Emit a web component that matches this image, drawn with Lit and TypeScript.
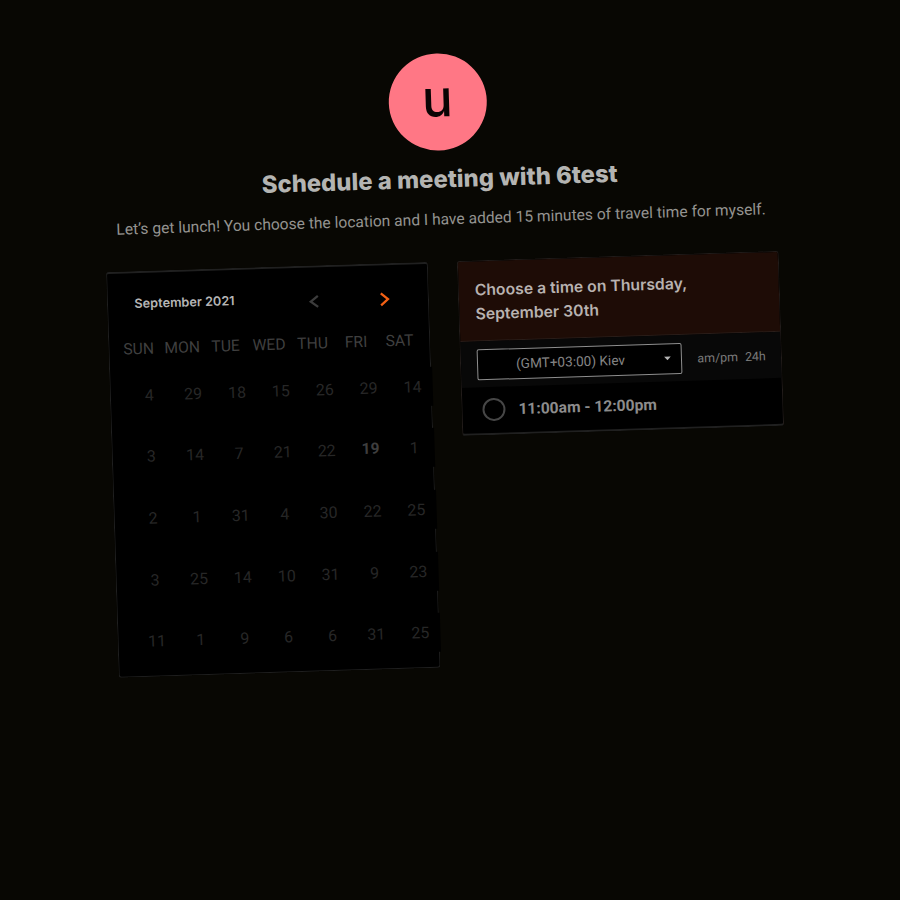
import { LitElement, html, css } from "lit";
import { customElement } from "lit/decorators.js";
import { classMap } from "lit/directives/class-map.js";

const WEEKDAYS = ["SUN", "MON", "TUE", "WED", "THU", "FRI", "SAT"];
const WEEKS = [
  [4, 29, 18, 15, 26, 29, 14],
  [3, 14, 7, 21, 22, 19, 1],
  [2, 1, 31, 4, 30, 22, 25],
  [3, 25, 14, 10, 31, 9, 23],
  [11, 1, 9, 6, 6, 31, 25],
];

@customElement("month-calendar")
class MonthCalendar extends LitElement {
  static styles = css`
    :host {
      display: block;
      box-sizing: border-box;
      width: 322px;
      height: 405.5px;
      border: 1px solid #1f1f1f;
      border-top: 2px solid #202020;
      border-radius: 3px;
      background: #000;
      font-family: Roboto, sans-serif;
    }
    .head {
      display: flex;
      align-items: center;
      height: 20px;
      padding: 23px 0 0 26.5px;
    }
    .title {
      width: 163px;
      font: 600 12.7px/20px Inter, sans-serif;
      color: #b5b5b5;
      margin-top: -5px;
    }
    .arrow {
      width: 32px;
      height: 16px;
      margin-right: 39.5px;
      margin-top: 2px;
      fill: none;
      stroke: #3c3c3c;
      stroke-width: 2.3;
    }
    .next {
      stroke: #f26014;
      margin-right: 0;
    }
    .names,
    .week {
      display: grid;
      grid-template-columns: repeat(7, 43.5px);
      text-align: center;
    }
    .names {
      margin: 23px 0 0 7.5px;
      font-size: 15.7px;
      line-height: 20px;
      color: #3f3f3f;
    }
    .weeks {
      display: grid;
      row-gap: 22.7px;
      margin: 16.5px 0 0 14.5px;
    }
    .week {
      grid-template-columns: repeat(7, 43.9px);
    }
    .day {
      box-sizing: border-box;
      padding-left: 4px;
      background: #000;
      font-size: 16px;
      line-height: 39px;
      color: #272727;
    }
    .today {
      font-weight: 700;
      font-size: 15.5px;
      color: #3e3e3e;
    }
  `;

  render() {
    return html`
      <div class="head">
        <div class="title">September 2021</div>
        <svg class="arrow" viewBox="0 0 32 16"><path d="M20 2.5L12.8 8L20 13.5" /></svg>
        <svg class="arrow next" viewBox="0 0 32 16"><path d="M12 2L19 8L12 14" /></svg>
      </div>
      <div class="names">${WEEKDAYS.map((d) => html`<div>${d}</div>`)}</div>
      <div class="weeks">
        ${WEEKS.map(
          (w) => html`<div class="week">
            ${w.map((d) => html`<div class=${classMap({ day: true, today: d === 19 })}>${d}</div>`)}
          </div>`
        )}
      </div>
    `;
  }
}

@customElement("time-picker")
class TimePicker extends LitElement {
  static styles = css`
    :host {
      display: block;
      box-sizing: border-box;
      width: 322px;
      height: 174.5px;
      border: 1px solid #221c1a;
      border-bottom: 2px solid #202020;
      border-radius: 3px;
      background: #000;
      overflow: hidden;
      font-family: Roboto, sans-serif;
    }
    .title {
      box-sizing: border-box;
      height: 80px;
      padding: 17px 60px 0 16px;
      border-bottom: 1px solid #2a1e1a;
      background: #1e0c06;
      font: 600 15.75px/24px Inter, sans-serif;
      color: #b8b2b0;
    }
    .bar {
      display: flex;
      align-items: center;
      height: 46px;
      padding-left: 15.5px;
      background: #080808;
      color: #7a7a7a;
      font-size: 12.4px;
    }
    .select {
      box-sizing: border-box;
      display: flex;
      align-items: center;
      width: 205px;
      height: 31px;
      border: 1px solid #8e8e8e;
      border-radius: 2px;
      background: #000;
      color: #858585;
      font-size: 13.6px;
    }
    .zone {
      width: 186px;
      text-align: center;
    }
    .caret {
      width: 7px;
      height: 4px;
      fill: #b5b5b5;
    }
    .ampm {
      margin: 0 7px 0 16px;
    }
    .slot {
      display: flex;
      align-items: center;
      height: 45px;
      padding-left: 20px;
      font-weight: 700;
      font-size: 15.6px;
      color: #8c8c8c;
    }
    .radio {
      box-sizing: border-box;
      width: 23px;
      height: 23px;
      margin-right: 13px;
      border: 2px solid #464646;
      border-radius: 50%;
    }
  `;

  render() {
    return html`
      <div class="title">Choose a time on Thursday, September 30th</div>
      <div class="bar">
        <div class="select">
          <span class="zone">(GMT+03:00) Kiev</span>
          <svg class="caret" viewBox="0 0 7 4"><path d="M0 0H7L3.5 3.8Z" /></svg>
        </div>
        <span class="ampm">am/pm</span><span>24h</span>
      </div>
      <div class="slot"><span class="radio"></span>11:00am - 12:00pm</div>
    `;
  }
}

@customElement("app-root")
class AppRoot extends LitElement {
  static styles = css`
    :host {
      display: block;
      box-sizing: border-box;
      height: 900px;
      padding: 64px 0 0 106px;
      overflow: hidden;
      background: #080703;
    }
    .page {
      display: flex;
      flex-direction: column;
      align-items: center;
      width: 673px;
      transform: rotate(-1.8deg);
      transform-origin: 0 209px;
    }
    .avatar {
      width: 98px;
      height: 97px;
      border-radius: 50%;
      background: #ff7785;
      color: #0a0404;
      font: 500 51px/90px Inter, sans-serif;
      text-align: center;
    }
    .heading {
      margin: 13px 0 0;
      font: 800 23.85px/32px Inter, sans-serif;
      color: #b4b4b2;
      white-space: nowrap;
    }
    .note {
      margin: 11.5px 0 30.5px;
      font: 400 15.6px/24px Roboto, sans-serif;
      color: #949390;
      white-space: nowrap;
    }
    .cards {
      display: flex;
      align-items: flex-start;
      justify-content: space-between;
      width: 100%;
    }
  `;

  render() {
    return html`
      <div class="page">
        <div class="avatar">u</div>
        <h1 class="heading">Schedule a meeting with 6test</h1>
        <p class="note">Let’s get lunch! You choose the location and I have added 15 minutes of travel time for myself.</p>
        <div class="cards">
          <month-calendar></month-calendar>
          <time-picker></time-picker>
        </div>
      </div>
    `;
  }
}
